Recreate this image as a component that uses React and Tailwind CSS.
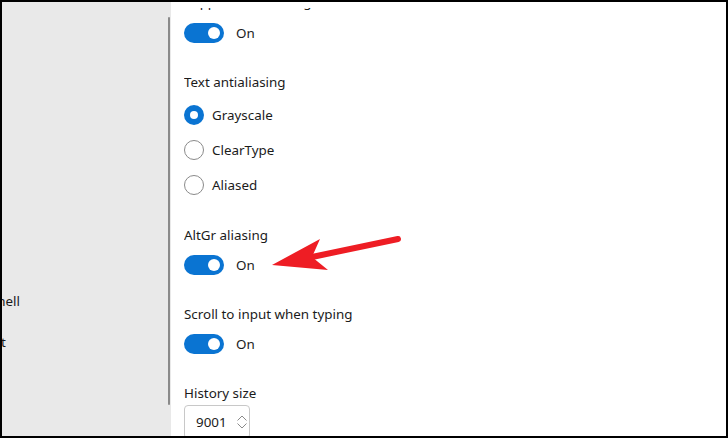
import React from "react";

function Toggle() {
    return (
        <div className="flex items-center gap-3">
            <div className="w-10 h-5 rounded-full bg-[#0a74d2] flex items-center justify-end pr-[4px]">
                <div className="w-3 h-3 rounded-full bg-white" />
            </div>
            <span>On</span>
        </div>
    );
}

function Radio({ label, checked }) {
    return (
        <div className="flex items-center gap-2 h-5">
            {checked ? (
                <div className="w-5 h-5 rounded-full bg-[#0a74d2] flex items-center justify-center">
                    <div className="w-2 h-2 rounded-full bg-white" />
                </div>
            ) : (
                <div className="w-5 h-5 rounded-full border border-[#8a8a8a] bg-white" />
            )}
            <span>{label}</span>
        </div>
    );
}

export default function App() {
    return (
        <div className="relative w-[728px] h-[438px] overflow-hidden border-2 border-black flex text-[13.4px] text-[#1b1b1b]" style={{ fontFamily: '"Segoe UI", "Noto Sans", sans-serif' }}>
            {/* left nav pane, scrolled offscreen */}
            <div className="w-[169px] bg-[#e9e9e9] relative shrink-0">
                <div className="absolute right-[151px] top-[288px] flex flex-col items-start gap-[19px] leading-[22px] whitespace-nowrap">
                    <span>Windows PowerShell</span>
                    <span>Command Prompt</span>
                </div>
                <div className="absolute right-[1px] top-[15px] w-[2px] h-[388px] bg-[#8a8a8a] rounded" />
            </div>

            {/* settings content (scrolled) */}
            <div className="flex-1 bg-white pl-[13px] flex flex-col">
                <div className="mt-[6px] flex-1 overflow-hidden">
                    <div className="flex flex-col -mt-[16px]">
                        <div className="leading-5">Suppress title changes</div>
                        <div className="mt-[11px]"><Toggle /></div>

                        <div className="mt-[29px] leading-5">Text antialiasing</div>
                        <div className="mt-[13px] flex flex-col gap-[15px]">
                            <Radio label="Grayscale" checked />
                            <Radio label="ClearType" />
                            <Radio label="Aliased" />
                        </div>

                        <div className="mt-[30px] leading-5">AltGr aliasing</div>
                        <div className="mt-[10px]"><Toggle /></div>

                        <div className="mt-[29px] leading-5">Scroll to input when typing</div>
                        <div className="mt-[10px]"><Toggle /></div>

                        <div className="mt-[29px] leading-5">History size</div>
                        <div className="mt-[2px] w-[66px] h-[34px] border border-[#c8c8c8] rounded-[4px] flex items-center pl-[11px] gap-[9px]">
                            <span>9001</span>
                            <svg width="12" height="16" viewBox="0 0 12 16" fill="none" stroke="#8a8a8a" strokeWidth="1">
                                <path d="M1.5 6.5 L6 2 L10.5 6.5" />
                                <path d="M1.5 9.5 L6 14 L10.5 9.5" />
                            </svg>
                        </div>
                    </div>
                </div>
            </div>

            {/* red annotation arrow */}
            <svg className="absolute left-0 top-0" width="728" height="438" viewBox="0 0 728 438">
                <line x1="396" y1="237" x2="310" y2="255" stroke="#ee1d24" strokeWidth="6" strokeLinecap="round" />
                <polygon points="270,263 318,237 310,255 326,268" fill="#ee1d24" />
            </svg>
        </div>
    );
}
